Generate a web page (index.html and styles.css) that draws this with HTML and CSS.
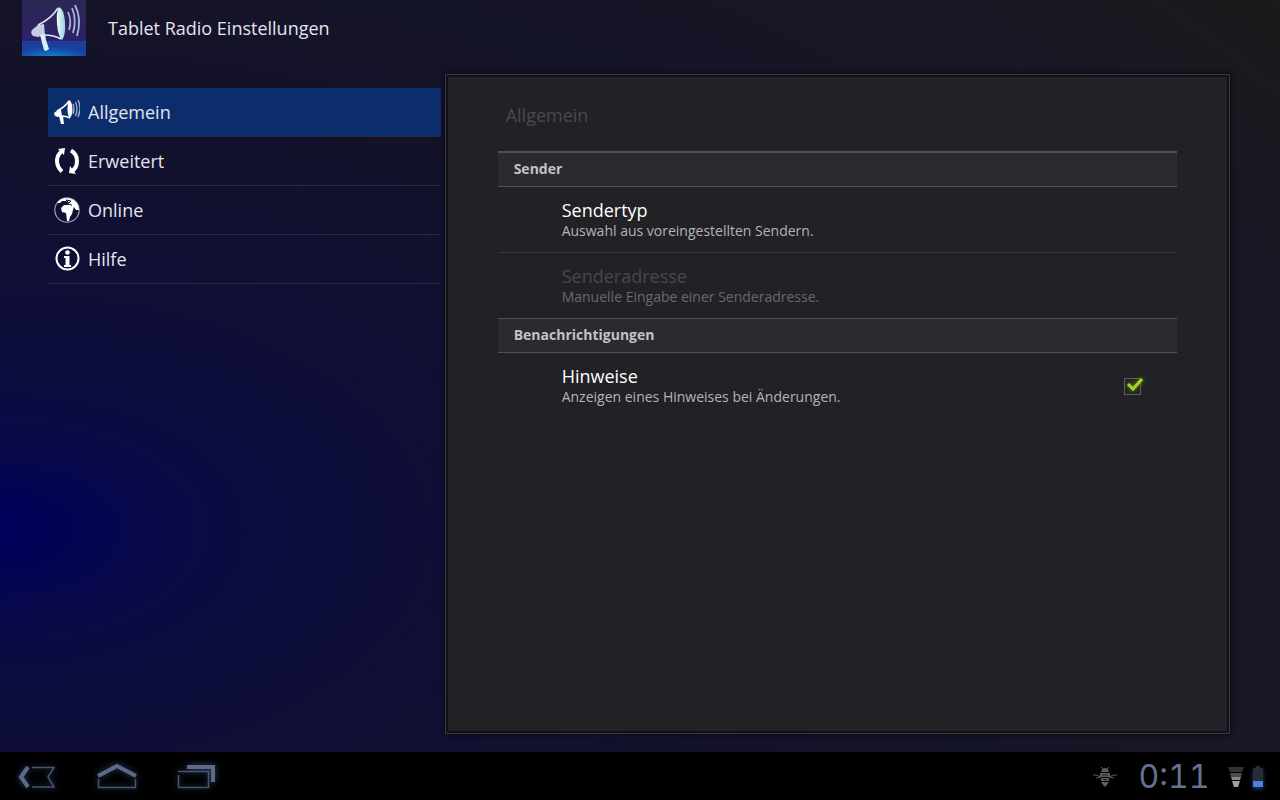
FILE: index.html
```html
<!DOCTYPE html>
<html lang="de">

<head>
    <meta charset="UTF-8">
    <meta name="viewport" content="width=device-width, initial-scale=1.0">
    <title>Tablet Radio Einstellungen</title>
    <link rel="stylesheet" href="styles.css">
</head>

<body>

    <header class="app-header">
        <svg class="app-logo" viewBox="0 0 64 56" aria-hidden="true">
            <defs>
                <linearGradient id="logo-top" x1="0" y1="0" x2="0" y2="1">
                    <stop offset="0" stop-color="#2b2852" />
                    <stop offset="1" stop-color="#2d1f73" />
                </linearGradient>
                <radialGradient id="logo-bottom" cx="0.45" cy="1" r="0.6">
                    <stop offset="0" stop-color="#0b7fd0" />
                    <stop offset="1" stop-color="#1c3f9e" />
                </radialGradient>
                <linearGradient id="horn" x1="0" y1="0" x2="1" y2="0">
                    <stop offset="0" stop-color="#f4fbfd" />
                    <stop offset="1" stop-color="#8fd3dd" />
                </linearGradient>
            </defs>
            <rect width="64" height="56" fill="url(#logo-top)" />
            <rect y="41" width="64" height="15" fill="url(#logo-bottom)" />
            <path d="M10 30l6-5 6-1 1 11-7 2-5-1q-3-3-1-6z" fill="#c3cfe0" />
            <path d="M18 35l5-1 1 6 3 9-3 2-2-1z" fill="#d9f1fb" />
            <path d="M16 25Q29 19 36 8M22 35q10 0 17 4" fill="none" stroke="#dfe8f3" stroke-width="1.500" />
            <path d="M37 7q5 2 6 15 1 13-3 18-4-4-5-16-1-12 2-17z" fill="url(#horn)" />
            <path d="M46 12q4 9 1 18M50 8q5 12 1 25M53 5q7 14 2 31" fill="none" stroke="#a9b4dc" stroke-width="1.800" />
        </svg>
        <h1>Tablet Radio Einstellungen</h1>
    </header>

    <main class="content">
        <nav class="categories" aria-label="Kategorien">
            <a class="category active" href="#allgemein">
                <svg class="category-icon" viewBox="0 0 26 26" fill="none" stroke="#fff" aria-hidden="true">
                    <path d="M0 14l4-3 3 0 1 6-4 1-3-1z" fill="#fff" stroke="none" />
                    <path d="M5 17l4 0 1 8-3 0z" fill="#fff" stroke="none" />
                    <path d="M3 12Q11 8 15 2M8 17q4 0 8 2" stroke-width="1.500" />
                    <path d="M15 1q3 1 3.500 9 0 7-3 9-2-3-2-9t1.500-9z" fill="#fff" stroke="none" />
                    <path d="M19 5q2 5 0 10M21.500 3q3 7 0 14M24 1q4 8 0 17" stroke="#a4b3d4" stroke-width="1.300" />
                </svg>
                Allgemein
            </a>
            <a class="category" href="#erweitert">
                <svg class="category-icon" viewBox="0 0 26 26" aria-hidden="true">
                    <path d="M8 3Q3 7 3 13T8 23.500M17 2.500Q23 6 23 13T18 23" fill="none" stroke="#fff" stroke-width="4" />
                    <path d="M4 1l7-1-1 7zM22 26l-7-1 1-7z" fill="#fff" />
                </svg>
                Erweitert
            </a>
            <a class="category" href="#online">
                <svg class="category-icon" viewBox="0 0 26 26" aria-hidden="true">
                    <circle cx="13" cy="13" r="12.200" fill="none" stroke="#9c9cb4" stroke-width="1.200" />
                    <path d="M3 6q4-5 9-5 9 0 12.500 8l.5 4-3 0-2-3-1 3-1 4-2 3-1 4-2 0-1-8-4-1-1-4 3-3 4 0 1-2-3-2-4 0-2 2z" fill="#fff" />
                    <path d="M12 3l5 1-2 2zM12 7l6 1" fill="none" stroke="#12102e" />
                </svg>
                Online
            </a>
            <a class="category" href="#hilfe">
                <svg class="category-icon" viewBox="0 0 26 26" aria-hidden="true">
                    <circle cx="13.500" cy="12.500" r="11" fill="none" stroke="#fff" stroke-width="2" />
                    <circle cx="13.500" cy="6.500" r="2.300" fill="#fff" />
                    <path d="M11 10h4.500v9h1.500v2h-7v-2h1.500v-7h-1.500v-2z" fill="#fff" />
                </svg>
                Hilfe
            </a>
        </nav>

        <section class="panel" id="allgemein">
            <h2 class="panel-title">Allgemein</h2>

            <h3 class="group-title">Sender</h3>
            <button class="setting" type="button">
                <span class="setting-name">Sendertyp</span>
                <span class="setting-info">Auswahl aus voreingestellten Sendern.</span>
            </button>
            <button class="setting" type="button" disabled>
                <span class="setting-name">Senderadresse</span>
                <span class="setting-info">Manuelle Eingabe einer Senderadresse.</span>
            </button>

            <h3 class="group-title">Benachrichtigungen</h3>
            <div class="setting setting-check">
                <label for="hinweise">
                    <span class="setting-name">Hinweise</span>
                    <span class="setting-info">Anzeigen eines Hinweises bei Änderungen.</span>
                </label>
                <span class="check">
                    <input type="checkbox" id="hinweise" checked>
                    <svg class="check-mark" viewBox="0 0 22 18" aria-hidden="true">
                        <path d="M4 8l5 5 9-10" fill="none" stroke="#a4d61c" stroke-width="3" />
                    </svg>
                </span>
            </div>
        </section>
    </main>

    <footer class="system-bar">
        <div class="nav-buttons">
            <button type="button" aria-label="Zurück">
                <svg viewBox="0 0 42 28" fill="none">
                    <path d="M12 4L5 14l7 10" stroke="#5d6986" stroke-width="4" />
                    <path d="M16 4.500h22l-6 9.500 6 10H16" stroke="#4b566c" stroke-width="1.500" />
                </svg>
            </button>
            <button type="button" aria-label="Startseite">
                <svg viewBox="0 0 42 28" fill="none">
                    <path d="M2 13L21 3l19 10" stroke="#5d6986" stroke-width="4" />
                    <path d="M2.500 16v8.500h37V16" stroke="#4b566c" stroke-width="1.500" />
                </svg>
            </button>
            <button type="button" aria-label="Letzte Apps">
                <svg viewBox="0 0 42 28" fill="none">
                    <path d="M11 4h26v15" stroke="#5d6986" stroke-width="4" />
                    <path d="M2 8.500h30.500v16h-30V12" stroke="#4b566c" stroke-width="1.500" />
                </svg>
            </button>
        </div>
        <div class="status">
            <svg class="bee" viewBox="0 0 26 20" fill="none" stroke="#5c5c5c" aria-hidden="true">
                <path d="M9 0l2 2M17 0l-2 2M1 8h3l5 2M25 8h-3l-5 2M4 11l5-1M22 11l-5-1" />
                <path d="M9 5q1-4 4-4t4 4zM8 6h10v4H8zM9 11h8v3H9zM9 15h8l-2 3-2 2-2-2z" fill="#5c5c5c" stroke="none" />
                <path d="M10 8h6M11 12.500h4" stroke="#222" />
            </svg>
            <time class="clock" datetime="00:11">0:11</time>
            <svg class="signal" viewBox="0 0 16 20" aria-hidden="true">
                <path d="M0 0h16l-2 5H2z" fill="#30343a" />
                <path d="M2 6h12l-1 4H3z" fill="#474b50" />
                <path d="M3 10h10l-1 3H4z" fill="#868686" />
                <path d="M4 14h8l-2 6H6z" fill="#a0a0a0" />
            </svg>
            <svg class="battery" viewBox="0 0 12 24" aria-hidden="true">
                <path d="M4 1h4v2h3v13H1V3h3z" fill="#292d38" />
                <path d="M1 16h10v6H1z" fill="#527fd8" />
            </svg>
        </div>
    </footer>

</body>

</html>
```
FILE: styles.css
```css
* {
    box-sizing: border-box;
    margin: 0;
    padding: 0;
}

body {
    display: flex;
    flex-direction: column;
    min-height: 100vh;
    background: radial-gradient(ellipse 1400px 770px at 0 530px, #00005c 0%, #030354 5%, #09094a 11%, #0b0b3f 18%, #0d0d3a 26%, #100f34 35%, #131229 60%, #171725 95%, #1a1a1a 115%);
    color: #e4e4ee;
    font-family: 'Open Sans', 'Noto Sans', sans-serif;
    font-size: 18px;
}

button {
    border: none;
    background: none;
    color: inherit;
    font-family: inherit;
    cursor: pointer;
}

.app-header {
    display: flex;
    align-items: center;
    gap: 22px;
    height: 56px;
    padding-left: 22px;
}

.app-logo {
    width: 64px;
    height: 56px;
}

.app-header h1 {
    font-size: 18px;
    font-weight: 400;
}

.content {
    display: grid;
    grid-template-columns: 1fr 2fr;
    flex: 1;
    gap: 4px;
    padding: 18px 50px 18px 48px;
}

/* Left list */
.categories {
    padding-top: 14px;
}

.category {
    display: flex;
    align-items: center;
    gap: 8px;
    height: 49px;
    padding-left: 6px;
    border-bottom: 1px solid #2a2943;
    color: #e4e4ee;
    text-decoration: none;
}

.category.active {
    background-color: #0c2d6b;
}

.category-icon {
    width: 26px;
    height: 26px;
}

/* Right panel */
.panel {
    padding: 0 52px;
    border: 1px solid #3a3b48;
    outline: 1px solid #0b0b16;
    background-color: #222226;
    box-shadow: inset 0 0 0 2px #101016, 0 0 5px #07070f;
}

.panel-title {
    padding: 28px 8px 24px;
    color: #49494b;
    font-size: 18px;
    font-weight: 400;
    line-height: 24px;
}

.group-title {
    height: 35px;
    padding: 0 16px;
    border-top: 1px solid #505055;
    border-bottom: 1px solid #505055;
    background-color: #2a2a2f;
    color: #c2c2c4;
    font-size: 14px;
    font-weight: 700;
    line-height: 32px;
}

.panel-title + .group-title {
    border-top-width: 2px;
    height: 36px;
}

.setting {
    display: block;
    width: 100%;
    padding: 12px 36px 11px 64px;
    text-align: left;
}

.setting + .setting {
    border-top: 1px solid #343439;
}

.setting-name,
.setting-info {
    display: block;
}

.setting-name {
    color: #fff;
    font-size: 18px;
    line-height: 22px;
}

.setting-info {
    color: #b4b4b6;
    font-size: 14px;
    line-height: 20px;
}

.setting:disabled .setting-name {
    color: #48484b;
}

.setting:disabled .setting-info {
    color: #69696c;
}

.setting-check {
    display: flex;
    align-items: center;
    justify-content: space-between;
}

.check {
    position: relative;
    width: 17px;
    height: 17px;
}

.check input {
    display: block;
    width: 17px;
    height: 17px;
    border: 1px solid #5c5c62;
    appearance: none;
}

.check-mark {
    position: absolute;
    top: -2px;
    left: 0;
    width: 22px;
    height: 18px;
    filter: drop-shadow(0 0 2px #6c9a00);
    pointer-events: none;
}

.check input:not(:checked) + .check-mark {
    display: none;
}

/* Bottom bar */
.system-bar {
    display: flex;
    align-items: center;
    justify-content: space-between;
    height: 48px;
    padding: 2px 16px 0;
    background-color: #000;
}

.nav-buttons {
    display: flex;
    gap: 38px;
}

.nav-buttons svg {
    display: block;
    width: 42px;
    height: 28px;
    filter: drop-shadow(0 0 3px #2b4677);
}

.status {
    display: flex;
    align-items: center;
}

.bee {
    width: 26px;
    height: 20px;
    margin-right: 18px;
}

.clock {
    min-width: 76px;
    margin-right: 16px;
    color: #66728f;
    font-family: Inter, Roboto, sans-serif;
    font-size: 32px;
    font-variant-numeric: tabular-nums;
    line-height: 28px;
    text-align: center;
}

.signal {
    width: 16px;
    height: 20px;
    margin-right: 8px;
}

.battery {
    width: 12px;
    height: 24px;
    filter: drop-shadow(0 2px 2px #173a80);
}
```
